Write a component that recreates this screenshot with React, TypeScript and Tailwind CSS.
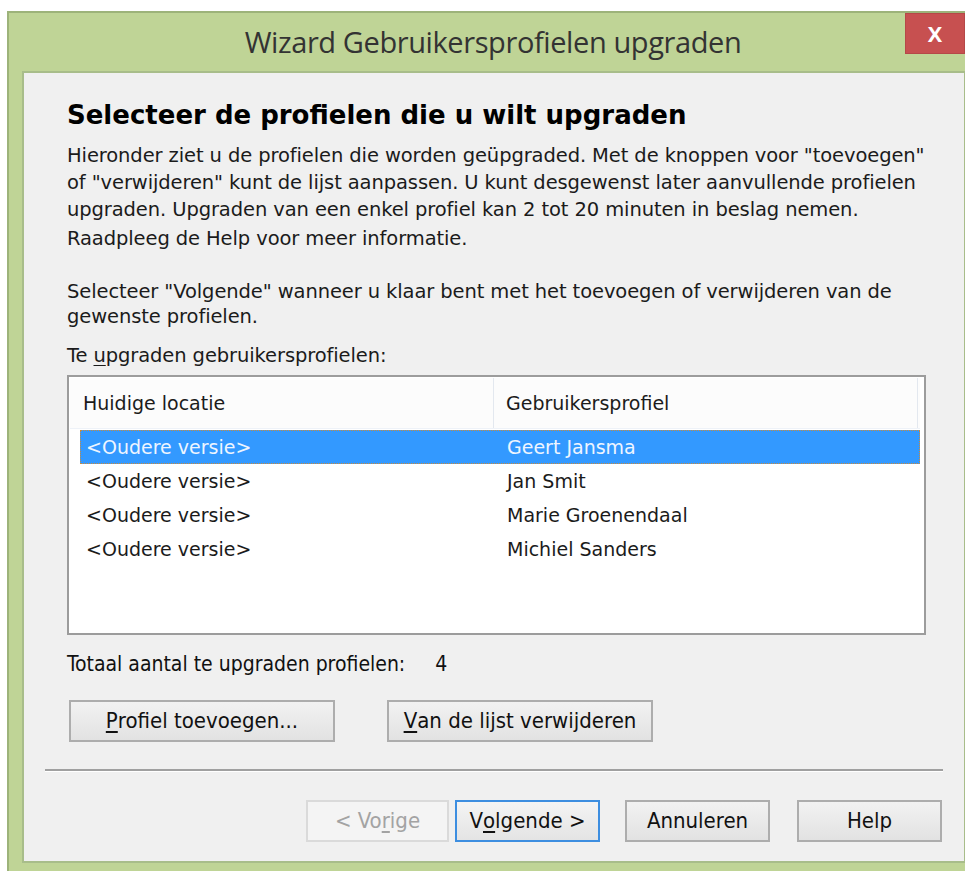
import { ReactNode } from "react"

const body = "font-['Tahoma','DejaVu_Sans',sans-serif]"
const narrow = "font-['Liberation_Sans_Narrow','DejaVu_Sans_Condensed',sans-serif]"

const profiles = [
  { loc: "<Oudere versie>", name: "Geert Jansma" },
  { loc: "<Oudere versie>", name: "Jan Smit" },
  { loc: "<Oudere versie>", name: "Marie Groenendaal" },
  { loc: "<Oudere versie>", name: "Michiel Sanders" },
]

function Btn({ children, className = "", disabled = false, primary = false }: { children: ReactNode; className?: string; disabled?: boolean; primary?: boolean }) {
  return (
    <button
      disabled={disabled}
      className={`h-[42px] flex items-center justify-center text-[22px] ${narrow} border-2 ${
        disabled
          ? "border-[#dadada] text-[#a3a3a3] bg-[#f4f4f4]"
          : primary
          ? "border-[#3d8ee0] text-[#111] bg-gradient-to-b from-[#f4f4f4] to-[#e4e4e4]"
          : "border-[#adadad] text-[#111] bg-gradient-to-b from-[#f2f2f2] to-[#e2e2e2]"
      } ${className}`}
    >
      {children}
    </button>
  )
}

export default function App() {
  return (
    <div className="w-[965px] h-[871px] bg-white overflow-hidden pt-[11px] pl-[7px]">
      <div className="relative w-[972px] h-[862px] bg-[#bfd496] border-l-2 border-t-2 border-[#9db37a] flex flex-col">
        {/* title bar */}
        <div className="h-[58px] flex items-center justify-center pr-[2px]">
          <span className="text-[29px] text-[#333] font-['Open_Sans',sans-serif] tracking-[-0.4px]">Wizard Gebruikersprofielen upgraden</span>
        </div>
        <div className="absolute right-[14px] top-0 w-[60px] h-[41px] bg-[#c75050] border border-[#b54848] flex items-center justify-center">
          <span className="text-white text-[27px] font-semibold font-['Open_Sans',sans-serif] leading-none -mt-[4px]">x</span>
        </div>

        {/* client area */}
        <div className={`ml-[13px] w-[944px] h-[792px] bg-[#f0f0f0] border-2 border-[#a8bd8a] ${body} text-[#1b1b1b]`}>
          <div className="pl-[43px] pr-[20px] pt-[25px]">
            <h1 className="text-[26px] font-bold leading-[34px] text-black">Selecteer de profielen die u wilt upgraden</h1>
            <p className="mt-[10px] text-[19.5px] leading-[27px] tracking-[-0.1px]">
              Hieronder ziet u de profielen die worden geüpgraded. Met de knoppen voor "toevoegen" of "verwijderen" kunt de lijst aanpassen. U kunt desgewenst later aanvullende profielen upgraden. Upgraden van een enkel profiel kan 2 tot 20 minuten in beslag nemen.
            </p>
            <p className="mt-[2px] text-[19.5px] leading-[27px] tracking-[-0.1px]">Raadpleeg de Help voor meer informatie.</p>
            <p className="mt-[27px] text-[19.5px] leading-[25px] tracking-[-0.1px]">
              Selecteer "Volgende" wanneer u klaar bent met het toevoegen of verwijderen van de gewenste profielen.
            </p>
            <p className="mt-[14px] text-[19.5px] leading-[25px] tracking-[-0.1px]">
              Te <span className="underline underline-offset-[3px]">u</span>pgraden gebruikersprofielen:
            </p>
          </div>

          {/* list view */}
          <div className="ml-[43px] mt-[7px] w-[859px] h-[260px] bg-white border-2 border-[#9c9c9c] pt-[1px] pl-[1px] pr-[4px]">
            <div className="flex h-[51px] bg-[#fcfcfc] border-b border-[#eef2f8] text-[19px] text-[#1b1b1b]">
              <div className="w-[424px] pl-[13px] flex items-center border-r border-[#e3e8ef]">Huidige locatie</div>
              <div className="w-[424px] pl-[12px] flex items-center border-r border-[#e3e8ef]">Gebruikersprofiel</div>
            </div>
            <div className="pt-[1px] pl-[10px]">
              {profiles.map((p, i) => (
                <div
                  key={p.name}
                  className={`flex h-[34px] items-center text-[19px] ${
                    i === 0 ? "bg-[#3399ff] text-[#eef5ff] border border-dotted border-[#c98a3c]" : "border border-transparent"
                  }`}
                >
                  <div className="w-[414px] pl-[5px]">{p.loc}</div>
                  <div className="pl-[12px]">{p.name}</div>
                </div>
              ))}
            </div>
          </div>

          <div className={`ml-[43px] mt-[14px] flex items-center text-[21px] ${narrow} text-[#111]`}>
            <span>Totaal aantal te upgraden profielen:</span>
            <span className="ml-[30px]">4</span>
          </div>

          <div className="ml-[45px] mt-[19px] flex gap-[52px]">
            <Btn className="w-[266px]">
              <span className="underline underline-offset-[3px]">P</span>rofiel toevoegen...
            </Btn>
            <Btn className="w-[266px]">
              <span className="underline underline-offset-[3px]">V</span>an de lijst verwijderen
            </Btn>
          </div>

          <div className="ml-[21px] mr-[21px] mt-[27px] border-t-2 border-[#a0a0a0] border-b border-b-white" />

          <div className="mt-[28px] flex justify-end pr-[22px]">
            <Btn disabled className="w-[143px]">
              &lt; Vo<span className="underline underline-offset-[3px]">r</span>ige
            </Btn>
            <Btn primary className="w-[145px] ml-[6px]">
              V<span className="underline underline-offset-[3px]">o</span>lgende &gt;
            </Btn>
            <Btn className="w-[145px] ml-[25px]">Annuleren</Btn>
            <Btn className="w-[145px] ml-[27px]">Help</Btn>
          </div>
        </div>
      </div>
    </div>
  )
}
